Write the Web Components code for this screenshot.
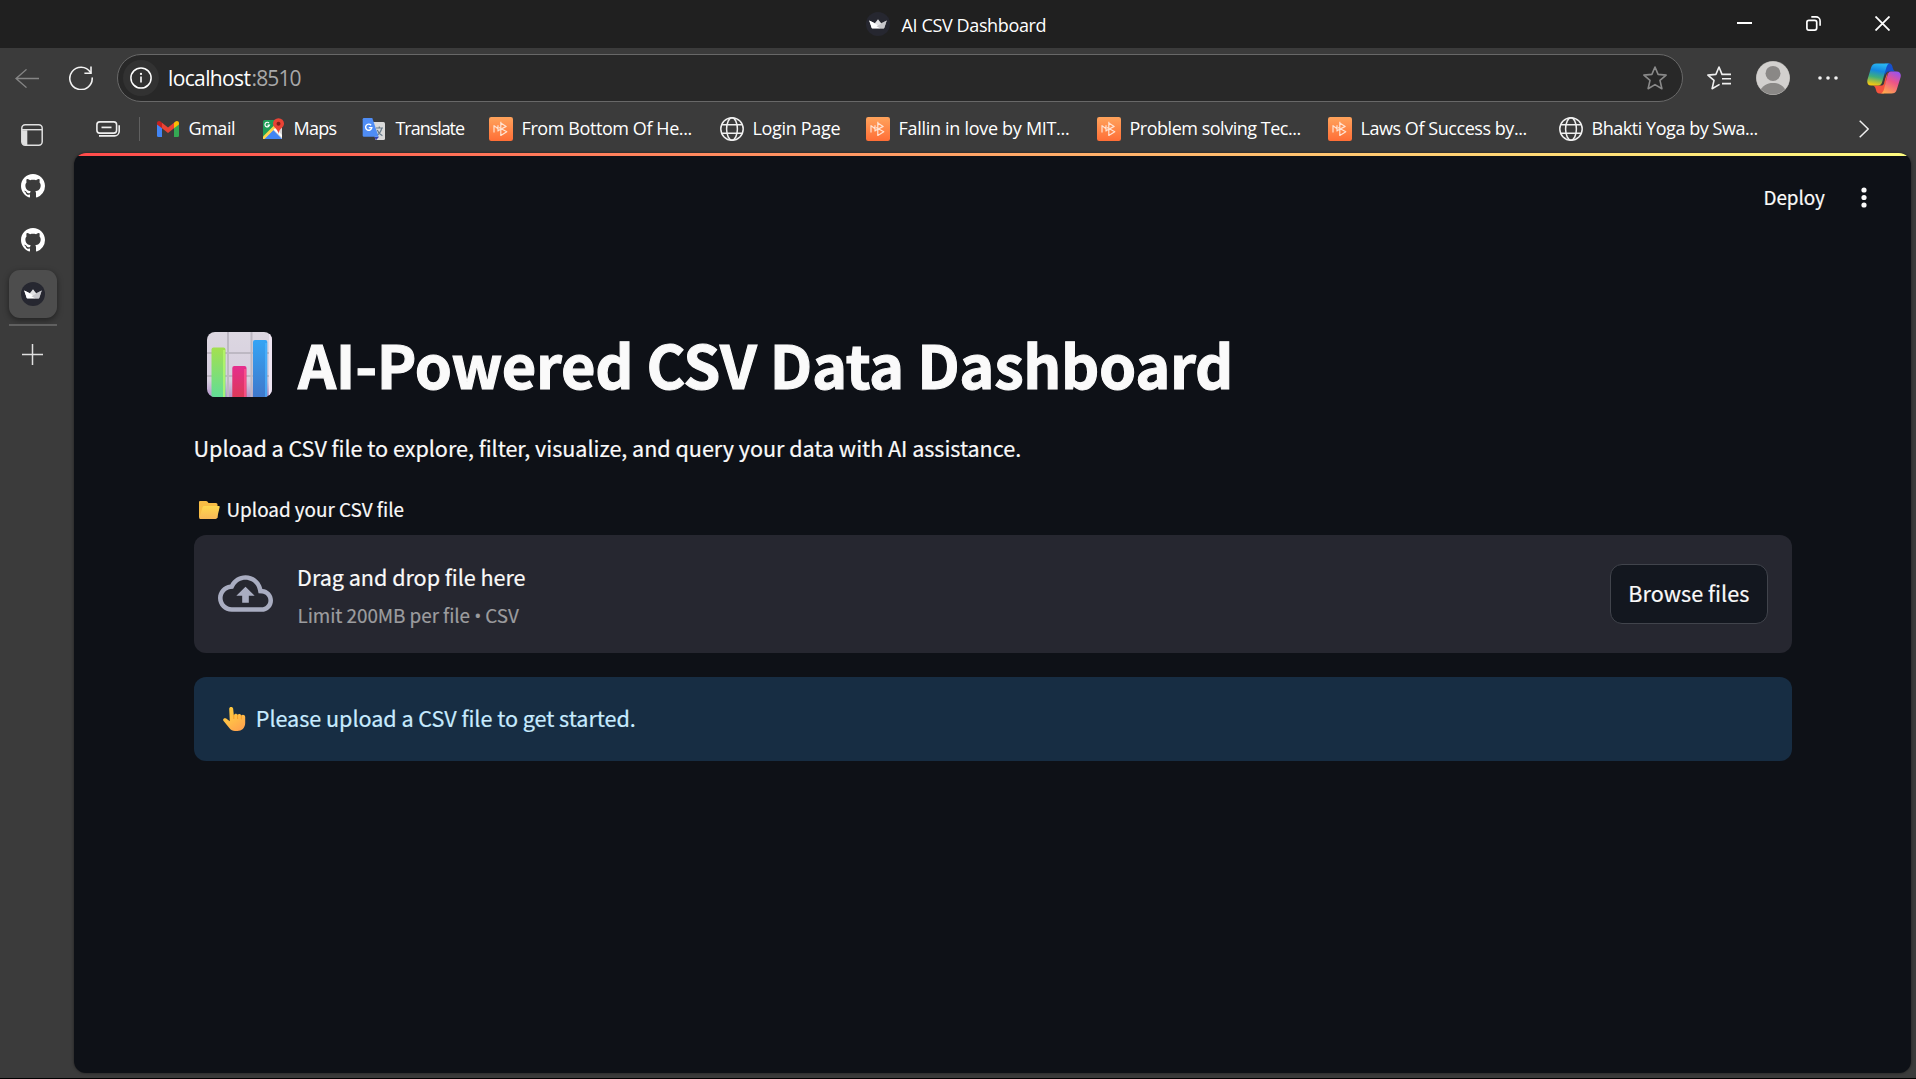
<!DOCTYPE html>
<html lang="en">
<head>
<meta charset="utf-8">
<title>AI CSV Dashboard</title>
<style>
html,body{margin:0;height:100%;background:#3b3b3b;overflow:hidden}
</style>
</head>
<body>
<browser-window></browser-window>
<script>
const ICONS = {
  crown: ['0 0 24 24', `<circle cx="12" cy="12" r="12" fill="#262730"/><path d="M3.2 8.4 9 11.2 5.8 16.1Z" fill="#fff"/><path d="M20.8 8.4 15 11.2 18.2 16.1Z" fill="#a9a9ad"/><path d="M12 7.2 16.6 13 18 16.4H6L7.4 13Z" fill="#e2e2e4"/><path d="M5.8 16.2 3.3 8.6 14 14.5V16.2Z" fill="#fff"/><path d="M20.7 8.6 10.5 14.2 14 16.3H18.2Z" fill="#c8c8cc"/>`],
  github: ['0 0 16 16', `<path fill="#fff" d="M8 0C3.58 0 0 3.58 0 8c0 3.54 2.29 6.53 5.47 7.59.4.07.55-.17.55-.38 0-.19-.01-.82-.01-1.49-2.01.37-2.53-.49-2.69-.94-.09-.23-.48-.94-.82-1.13-.28-.15-.68-.52-.01-.53.63-.01 1.08.58 1.23.82.72 1.21 1.87.87 2.33.66.07-.52.28-.87.51-1.07-1.78-.2-3.64-.89-3.64-3.95 0-.87.31-1.59.82-2.15-.08-.2-.36-1.02.08-2.12 0 0 .67-.21 2.2.82.64-.18 1.32-.27 2-.27s1.36.09 2 .27c1.53-1.04 2.2-.82 2.2-.82.44 1.1.16 1.92.08 2.12.51.56.82 1.27.82 2.15 0 3.07-1.87 3.75-3.65 3.95.29.25.54.73.54 1.48 0 1.07-.01 1.93-.01 2.2 0 .21.15.46.55.38A8.01 8.01 0 0 0 16 8c0-4.42-3.58-8-8-8Z"/>`],
  tabs: ['0 0 22 22', `<rect x=".8" y=".8" width="20.4" height="20.4" rx="3.4" fill="none" stroke="#e0e0e0" stroke-width="1.5"/><path d="M1 6.2V18a3 3 0 0 0 3 3h2.3V6.2Z" fill="#e0e0e0"/><path d="M1 5.7H21" stroke="#e0e0e0" stroke-width="1.4"/>`],
  plus: ['0 0 21 21', `<path d="M10.5 0V21M0 10.5H21" stroke="#e0e0e0" stroke-width="1.5"/>`],
  back: ['0 0 24 24', `<path d="M24 12H1M11.5 1.6 1 12 11.5 22.4" fill="none" stroke="#858585" stroke-width="1.5"/>`],
  reload: ['0 0 24 24', `<path d="M23.2 12A11.2 11.2 0 1 1 21.4 6.3" fill="none" stroke="#f2f2f2" stroke-width="1.6" stroke-linecap="round"/><path d="M22 .5V7.2H15.4" fill="none" stroke="#f2f2f2" stroke-width="1.6"/>`],
  info: ['0 0 22 22', `<circle cx="11" cy="11" r="10.1" fill="none" stroke="#fff" stroke-width="1.5"/><path d="M11 9.5V15.4" stroke="#fff" stroke-width="1.6"/><circle cx="11" cy="6.9" r="1.1" fill="#fff"/>`],
  star: ['0 0 24 24', `<path d="M12 1 15.1 8.4 23.1 9.1 17 14.4 18.9 22.7 12 18.6 5.1 22.7 7 14.4.9 9.1 8.9 8.4Z" fill="none" stroke="#8a8a8a" stroke-width="1.6" stroke-linejoin="round"/>`],
  favs: ['0 0 24 24', `<path d="M12.6 18.4 5.1 22.7 7 14.4.9 9.1 8.9 8.4 12 1 15 8.4H24" fill="none" stroke="#f0f0f0" stroke-width="1.6" stroke-linejoin="round"/><path d="M15 12.8H24M15 17.6H24" stroke="#f0f0f0" stroke-width="1.6"/>`],
  avatar: ['0 0 34 34', `<clipPath id="a"><circle cx="17" cy="17" r="16.6"/></clipPath><circle cx="17" cy="17" r="17" fill="#a9a7a4"/><g clip-path="url(#a)"><rect width="34" height="34" fill="#d2d0ce"/><circle cx="17" cy="12.4" r="7.5" fill="#8a8886"/><path d="M3 32C6 24.5 11 22 17 22S28 24.5 31 32L17 36Z" fill="#8a8886"/></g>`],
  dots: ['0 0 20 6', `<g fill="#f2f2f2"><circle cx="2" cy="3" r="1.8"/><circle cx="10" cy="3" r="1.8"/><circle cx="18" cy="3" r="1.8"/></g>`],
  copilot: ['0 0 34 31', `<defs><linearGradient id="b" x1=".4" y1="0" x2=".2" y2="1"><stop offset="0" stop-color="#28b4f0"/><stop offset=".3" stop-color="#1487e0"/><stop offset=".6" stop-color="#3fae7c"/><stop offset=".95" stop-color="#f0c814"/></linearGradient><linearGradient id="c" x1=".8" y1="0" x2=".3" y2="1"><stop offset="0" stop-color="#9852f0"/><stop offset=".45" stop-color="#ee5487"/><stop offset="1" stop-color="#ffa84e"/></linearGradient></defs><path d="M18 .5H22.4C24.8.5 25.3 3 26 5.6 26.7 8 27.6 8.3 29.5 8.5H22C19.7 8.5 18.4 10.4 17.7 13Z" fill="#1650cc"/><path d="M8.5 22.5H14C16 22.5 16.5 20.5 17.5 17L20.8 8.7 17 30.5H12.5C10.3 30.5 9.5 29 9 27 8.4 24.5 7.7 23.2 6 22.5Z" fill="#f5533d"/><path d="M9.5 .5H23C20.9.5 20 2.3 19.2 5L15.4 18.3C14.6 21.2 13.4 22.5 11 22.5H4.2C.7 22.5-.3 19.5.5 16.5L4.1 4.6C5 1.6 6.6.5 9.5.5Z" fill="url(#b)"/><path d="M24 8.5H29.4C33.3 8.5 34.4 11.3 33.5 14.5L29.8 26.5C28.9 29.5 27.2 30.5 24.4 30.5H13C15.3 30.5 16.2 29 17 26.3L20.4 12.5C21.2 9.8 22 8.5 24 8.5Z" fill="url(#c)"/><path d="M18.8 11.5 17 20.5Q16.4 22.5 14.5 22.5 15 21.5 15.5 19.8Z" fill="#3b3b3b"/>`],
  minimize: ['0 0 15 15', `<path d="M0 7H15" stroke="#fff" stroke-width="2"/>`],
  restore: ['0 0 15 15', `<rect x=".9" y="4.3" width="9.8" height="9.8" rx="2" fill="none" stroke="#fff" stroke-width="1.7"/><path d="M5.3.9H10a4.1 4.1 0 0 1 4.1 4.1V9.8" fill="none" stroke="#fff" stroke-width="1.6"/>`],
  close: ['0 0 15 15', `<path d="M.5.5 14.5 14.5M14.5.5.5 14.5" stroke="#fff" stroke-width="1.8"/>`],
  stack: ['0 0 24 16', `<rect x=".9" y=".9" width="19.7" height="11.2" rx="2.8" fill="none" stroke="#eee" stroke-width="1.6"/><path d="M5.5 6.4H15.5" stroke="#eee" stroke-width="1.7"/><path d="M3 14.9H18.5A4.8 4.8 0 0 0 23.2 10.2V4.2" fill="none" stroke="#eee" stroke-width="1.6"/>`],
  gmail: ['0 0 22 16', `<path d="M0 3V14.7Q0 16 1.4 16H5V6Z" fill="#4285f4"/><path d="M22 3V14.7Q22 16 20.6 16H17V6Z" fill="#34a853"/><path d="M5 1.8 11 6.4 17 1.8V7.3L11 12 5 7.3Z" fill="#ea4335"/><path d="M0 2.2C0 .2 2.2-.7 3.9.8L5 1.8V7.3L0 3.6Z" fill="#c5221f"/><path d="M22 2.2C22 .2 19.8-.7 18.1.8L17 1.8V7.3L22 3.6Z" fill="#fbbc04"/>`],
  maps: ['0 0 22 22', `<rect x="1" y="2" width="19" height="19" rx="1.5" fill="#1f9d57"/><path d="M1 20 12 8.5 20 5V21H2Z" fill="#d8d8d8"/><path d="M2 21 11.2 12 20 21Z" fill="#4285f4"/><path d="M1 18.5 13 6.5 14.6 9 2.5 21H1Z" fill="#fdd34b"/><path d="M13.5 10 20 17V19.5L11.5 11.5Z" fill="#fff"/><path d="M16.5.2A5.5 5.5 0 0 0 11 5.8C11 9.7 15.8 10.2 16.4 16 17 10.2 22 9.7 22 5.8A5.5 5.5 0 0 0 16.5.2Z" fill="#ea4335"/><circle cx="16.5" cy="5.7" r="2" fill="#7d201b"/><path d="M7 5A2.3 2.3 0 1 0 7.5 7.2H5.5" fill="none" stroke="#fff" stroke-width="1.2"/>`],
  translate: ['0 0 24 24', `<path d="M9 5H21.5Q23 5 23 6.5V21.5Q23 23 21.5 23H13.5Z" fill="#dadada"/><path d="M14 11H21M17.3 9.5V11M19.8 11C19 14.5 17 17 14.4 18.5M15.2 13C16.3 15.6 18 17.4 20.4 18.8" fill="none" stroke="#6a7d8c" stroke-width="1.2"/><path d="M12.3 19.8H17L14 23.2Z" fill="#3340b0"/><path d="M2 1H10.3L16.6 19.8H2Q.7 19.8.7 18.5V2.3Q.7 1 2 1Z" fill="#4f8df5"/><path d="M9.1 8.2A3.1 3.1 0 1 0 9.8 10.6H6.8" fill="none" stroke="#fff" stroke-width="1.4"/>`],
  mb: ['0 0 24 24', `<defs><linearGradient id="d" x2="0" y2="1"><stop stop-color="#ffa35c"/><stop offset="1" stop-color="#ff6e36"/></linearGradient></defs><rect width="24" height="24" rx="2.2" fill="url(#d)"/><path d="M5 15.5V8.6L9 11.8M9 8.2V14.5M11.8 4.8V19M11.8 6 17.2 9.4 9 13.8M10 10.5 17.8 14.8 11.8 18.6" fill="none" stroke="#ffe3d2" stroke-width="1.2" stroke-linejoin="round"/>`],
  globe: ['0 0 24 24', `<g fill="none" stroke="#f0f0f0" stroke-width="1.5"><circle cx="12" cy="12" r="11.2"/><ellipse cx="12" cy="12" rx="5.4" ry="11.2"/><path d="M2 7.7H22M2 16.3H22"/></g>`],
  chevron: ['0 0 10 18', `<path d="M.7.7 9.2 9 .7 17.3" fill="none" stroke="#f0f0f0" stroke-width="1.5"/>`],
  kebab: ['0 0 6 21', `<g fill="#fafafa"><circle cx="3" cy="3" r="2.6"/><circle cx="3" cy="10.5" r="2.6"/><circle cx="3" cy="18" r="2.6"/></g>`],
  cloud: ['0 0 24 24', `<path fill="#a9adc1" d="M19.35 10.04C18.67 6.59 15.64 4 12 4 9.11 4 6.6 5.64 5.35 8.04 2.34 8.36 0 10.91 0 14c0 3.31 2.69 6 6 6h13c2.76 0 5-2.24 5-5 0-2.64-2.05-4.78-4.65-4.96zM19 18H6c-2.21 0-4-1.79-4-4 0-2.05 1.53-3.76 3.56-3.97l1.07-.11.5-.95C8.08 7.14 9.94 6 12 6c2.62 0 4.88 1.86 5.39 4.43l.3 1.5 1.53.11c1.56.1 2.78 1.41 2.78 2.96 0 1.65-1.35 3-3 3zM8 13h2.55v3h2.9v-3H16l-4-4z"/>`],
  chart: ['0 0 65 65', `<defs><linearGradient id="g" x2="0" y2="1"><stop stop-color="#a4e04f"/><stop offset="1" stop-color="#62dd96"/></linearGradient><linearGradient id="h" x2="0" y2="1"><stop stop-color="#e52e8e"/><stop offset="1" stop-color="#dc3958"/></linearGradient><linearGradient id="i" x2="0" y2="1"><stop stop-color="#35a4f4"/><stop offset="1" stop-color="#3f78cb"/></linearGradient><linearGradient id="j" x2="0" y2="1"><stop stop-color="#dcd7e1"/><stop offset=".75" stop-color="#d6cede"/><stop offset="1" stop-color="#b394cc"/></linearGradient><clipPath id="k"><rect width="65" height="65" rx="8"/></clipPath></defs><g clip-path="url(#k)"><rect width="65" height="65" fill="url(#j)"/><path d="M0 21H65M0 44H65M21 0V65M44.5 0V65" stroke="#bdb8c3" stroke-width="2"/><path d="M63.5 0V65" stroke="#eee5f2" stroke-width="3"/><path d="M4.5 65V17.5Q4.5 15.5 6.5 15.5H16.5Q18.5 15.5 18.5 17.5V65Z" fill="url(#g)"/><path d="M17 18V65" stroke="#b9f96c" stroke-width="2" opacity=".75"/><path d="M25.3 65V36Q25.3 34 27.3 34H37.5Q39.5 34 39.5 36V65Z" fill="url(#h)"/><path d="M38 37V65" stroke="#ff568f" stroke-width="2" opacity=".75"/><path d="M46 65V10Q46 8 48 8H58.3Q60.3 8 60.3 10V65Z" fill="url(#i)"/><path d="M59 11V65" stroke="#4eb5ff" stroke-width="2" opacity=".7"/></g>`],
  folder: ['0 0 21 18', `<defs><linearGradient id="l" x2="0" y2="1"><stop stop-color="#ffd84f"/><stop offset="1" stop-color="#f8b757"/></linearGradient></defs><path d="M0 1Q0 0 1 0H7Q8 0 8.6.8L9.5 2H17Q18.5 2 18.5 3.5V17H1Q0 17 0 16Z" fill="#f8bd45"/><path d="M5.4 5H19.8Q21 5 20.7 6.1L18.2 16.5Q17.8 18 16.3 18H1.2Q0 18 .4 16.8L3.6 6.3Q4 5 5.4 5Z" fill="url(#l)"/>`],
  hand: ['0 0 23 24', `<defs><linearGradient id="m" x2=".6" y2="1"><stop stop-color="#ffcc38"/><stop offset=".6" stop-color="#ffbd48"/><stop offset="1" stop-color="#ffa64d"/></linearGradient></defs><path d="M6.2 1.9C6.2-.5 10-.6 10.2 1.9L10.8 8.3C11.5 6 14.2 6.3 14.6 8.1 15.4 6.3 18 6.8 18.3 8.7 19.3 7 22.1 7.7 22.2 10V16C22.2 21 18.5 24 14.5 24H12C9.5 24 8 23 6.5 21.3L.6 14.1C-.9 12.1 1.4 10.3 3.2 11.6L6.8 14.2Z" fill="url(#m)"/><path d="M10.8 8.3V11.6M14.6 8.1V11.6M18.3 8.7V12" stroke="#f3961f" stroke-width=".8" stroke-linecap="round"/>`]
};

// <ui-icon name w h>: inline vector icon at a given size
class UiIcon extends HTMLElement {
  connectedCallback() {
    if (this.shadowRoot) return;
    const [vb, body] = ICONS[this.getAttribute('name')];
    const w = this.getAttribute('w'), h = this.getAttribute('h') || w;
    this.attachShadow({mode: 'open'}).innerHTML =
      `<style>:host{display:block;flex:none;width:${w}px;height:${h}px}svg{display:block;width:100%;height:100%}</style>
       <svg viewBox="${vb}" preserveAspectRatio="none" aria-hidden="true">${body}</svg>`;
  }
}
customElements.define('ui-icon', UiIcon);

// <fit-text w>: one line of text whose ink spans exactly w pixels
const measure = document.createElement('canvas').getContext('2d');
class FitText extends HTMLElement {
  connectedCallback() {
    if (this.shadowRoot) return;
    const w = +this.getAttribute('w');
    this.attachShadow({mode: 'open'}).innerHTML =
      `<style>:host{display:block;flex:none;width:${w}px;white-space:nowrap}span{display:block;width:max-content}</style><span><slot></slot></span>`;
    const cs = getComputedStyle(this), text = this.textContent;
    measure.font = `${cs.fontWeight} ${cs.fontSize} ${cs.fontFamily}`;
    const m = measure.measureText(text);
    const bearings = m.width - m.actualBoundingBoxLeft - m.actualBoundingBoxRight;
    const span = this.shadowRoot.querySelector('span');
    const ink = span.getBoundingClientRect().width - bearings;
    span.style.letterSpacing = ((w - ink) / (text.length - 1)).toFixed(3) + 'px';
    span.style.marginLeft = m.actualBoundingBoxLeft.toFixed(2) + 'px';
  }
}
customElements.define('fit-text', FitText);

function component(tag, html) {
  const t = document.createElement('template');
  t.innerHTML = html;
  customElements.define(tag, class extends HTMLElement {
    constructor() {
      super();
      this.attachShadow({mode: 'open'}).append(document.importNode(t.content, true));
    }
  });
}

component('title-bar', `<style>
:host{display:flex;align-items:flex-start;height:48px;background:#202020;color:#fff;box-sizing:border-box;padding-left:866px;font:18px/24px "Open Sans",sans-serif}
ui-icon{margin-top:12px}fit-text{margin:13px 0 0 11.5px}
.w{display:flex;gap:54px;margin:16px 26px 0 auto}.w ui-icon{margin:0}
</style><ui-icon name="crown" w="24"></ui-icon><fit-text w="144">AI CSV Dashboard</fit-text>
<div class="w"><ui-icon name="minimize" w="15"></ui-icon><ui-icon name="restore" w="15"></ui-icon><ui-icon name="close" w="15"></ui-icon></div>`);

component('address-bar', `<style>
:host{display:flex;align-items:center;height:48px;width:1566px;box-sizing:border-box;border:1px solid #686868;border-radius:24px;background:#282828;padding:0 15px 0 5px;color:#fff;font:21px/28px "Open Sans",sans-serif}
.i{display:grid;place-items:center;width:36px;height:36px;border-radius:50%;background:#323232}
.t{display:flex;margin-left:10px}.p{color:#a8a8a8;margin-left:2px}
ui-icon[name=star]{margin-left:auto}
</style><div class="i"><ui-icon name="info" w="22"></ui-icon></div>
<div class="t"><fit-text w="81.5">localhost</fit-text><fit-text class="p" w="48">:8510</fit-text></div><ui-icon name="star" w="24"></ui-icon>`);

component('tool-bar', `<style>
:host{display:flex;align-items:center;height:60px;box-sizing:border-box;padding:0 15px}
address-bar{margin-left:24px}
ui-icon[name=back]{margin-right:30px}.g{display:flex;align-items:center;margin-left:auto}
</style><ui-icon name="back" w="24" h="21"></ui-icon><ui-icon name="reload" w="24"></ui-icon><address-bar></address-bar>
<div class="g"><ui-icon name="favs" w="24"></ui-icon><ui-icon name="avatar" w="34" style="margin-left:25px"></ui-icon><ui-icon name="dots" w="20" h="6" style="margin-left:28px"></ui-icon><ui-icon name="copilot" w="34" h="31" style="margin-left:29px"></ui-icon></div>`);

component('book-mark', `<style>
:host{display:flex;align-items:center;flex:none;gap:9.5px}
.i{display:grid;place-items:center;width:24px;flex:none}
::slotted(fit-text){margin-top:-2px}
</style><div class="i"><slot name="icon"></slot></div><slot></slot>`);

component('bookmark-bar', `<style>
:host{display:flex;align-items:center;flex:none;height:45px;box-sizing:border-box;padding:0 47px 3px 22px;color:#fff;font:18px/24px "Open Sans",sans-serif}
.d{width:1px;height:24px;background:#606060;margin:0 16px 0 19px}
ui-icon[name=chevron]{margin-left:auto}
</style><ui-icon name="stack" w="24" h="16"></ui-icon><div class="d"></div>
<book-mark style="width:105px"><ui-icon slot="icon" name="gmail" w="22" h="16"></ui-icon><fit-text w="44.5">Gmail</fit-text></book-mark>
<book-mark style="width:101px"><ui-icon slot="icon" name="maps" w="22"></ui-icon><fit-text w="42">Maps</fit-text></book-mark>
<book-mark style="width:127px"><ui-icon slot="icon" name="translate" w="24"></ui-icon><fit-text w="69.5">Translate</fit-text></book-mark>
<book-mark style="width:231px"><ui-icon slot="icon" name="mb" w="24"></ui-icon><fit-text w="169">From Bottom Of He...</fit-text></book-mark>
<book-mark style="width:146px"><ui-icon slot="icon" name="globe" w="24"></ui-icon><fit-text w="87">Login Page</fit-text></book-mark>
<book-mark style="width:231px"><ui-icon slot="icon" name="mb" w="24"></ui-icon><fit-text w="169.5">Fallin in love by MIT...</fit-text></book-mark>
<book-mark style="width:231px"><ui-icon slot="icon" name="mb" w="24"></ui-icon><fit-text w="170">Problem solving Tec...</fit-text></book-mark>
<book-mark style="width:231px"><ui-icon slot="icon" name="mb" w="24"></ui-icon><fit-text w="165">Laws Of Success by...</fit-text></book-mark>
<book-mark><ui-icon slot="icon" name="globe" w="24"></ui-icon><fit-text w="165">Bhakti Yoga by Swa...</fit-text></book-mark>
<ui-icon name="chevron" w="10" h="18"></ui-icon>`);

component('side-tabs', `<style>
:host{display:flex;flex-direction:column;align-items:center;width:66px;box-sizing:border-box;padding-top:16px;flex:none}
.a{display:grid;place-items:center;width:48px;height:48px;border-radius:11px;background:#4d4d4d;box-shadow:0 2px 6px rgba(0,0,0,.45);margin-top:18px}
.d{width:48px;height:2px;background:#606060;margin:6px 0 18px}
</style><ui-icon name="tabs" w="22" style="margin-right:2px"></ui-icon><ui-icon name="github" w="24" style="margin-top:28px"></ui-icon><ui-icon name="github" w="24" style="margin-top:30px"></ui-icon>
<div class="a"><ui-icon name="crown" w="24"></ui-icon></div><div class="d"></div><ui-icon name="plus" w="21" style="margin-right:1px"></ui-icon>`);

component('file-uploader', `<style>
:host{display:flex;align-items:center;box-sizing:border-box;height:118px;background:#262730;border-radius:12px;padding:0 24px}
ui-icon{margin-top:-2px}
.t{margin-left:25.5px;height:70px}.m{line-height:36px;margin:0 0 0 .6px}.s{font-size:18.9px;line-height:32px;color:#9c9c9f;margin-top:4px}
.s i{font-family:"Open Sans",sans-serif;font-style:normal;line-height:1}
.b{margin-left:auto;width:158px;height:60px;box-sizing:border-box;border:1px solid #41444c;border-radius:12px;background:#13171f;display:grid;place-items:center;line-height:36px}
.b fit-text{margin:-3px 0 0 1.5px}
</style><ui-icon name="cloud" w="55" h="55"></ui-icon><div class="t"><fit-text class="m" w="226.5">Drag and drop file here</fit-text><fit-text class="s" w="220.5">Limit 200MB per file <i>•</i> CSV</fit-text></div>
<div class="b"><fit-text w="119">Browse files</fit-text></div>`);

component('info-alert', `<style>
:host{display:flex;align-items:center;box-sizing:border-box;height:84px;background:#172d43;border-radius:12px;color:#c7ebff;padding-left:29px;margin-top:24px;line-height:36px}
ui-icon{margin-top:-1px}fit-text{margin:-2px 0 0 11.8px}
</style><ui-icon name="hand" w="23" h="24"></ui-icon><fit-text w="377">Please upload a CSV file to get started.</fit-text>`);

component('dashboard-page', `<style>
:host{display:flex;flex-direction:column;height:920px;margin:0 5px 0 8px;box-sizing:border-box;background:#0e1117;border-radius:12px;overflow:hidden;color:#fafafa;font:21.6px/36px "Noto Sans CJK SC","Noto Sans",sans-serif;-webkit-text-stroke:.2px;box-shadow:0 0 3px rgba(0,0,0,.5)}
.g{height:3px;flex:none;background:linear-gradient(90deg,#ff4b4b,#ffa667 50%,#fffd80)}
header{display:flex;flex:none;justify-content:flex-end;align-items:center;height:84px;padding-right:44px;gap:36px;font-size:18.9px;line-height:32px;box-sizing:border-box}
header fit-text{margin-top:-3px}header ui-icon{margin-top:-1px}
main{display:flex;flex-direction:column;padding:84px 119px 0 120px}
h1{display:flex;align-items:center;margin:0;height:81px;padding-left:13px;gap:25px;font-size:59.5px;line-height:80px;font-weight:700;-webkit-text-stroke:1.1px}
h1 fit-text{margin-top:-4px}
.p{margin:25px 0 0 1.6px}.l{display:flex;align-items:center;height:32px;margin:27px 0 10px 5px;gap:7.5px;font-size:18.9px;line-height:32px}
.l ui-icon{margin-top:2px}
</style><div class="g"></div>
<header><fit-text w="60.5">Deploy</fit-text><ui-icon name="kebab" w="6" h="21"></ui-icon></header>
<main><h1><ui-icon name="chart" w="65" h="65"></ui-icon><fit-text w="932">AI-Powered CSV Data Dashboard</fit-text></h1>
<fit-text class="p" w="824.5">Upload a CSV file to explore, filter, visualize, and query your data with AI assistance.</fit-text>
<div class="l"><ui-icon name="folder" w="21" h="18"></ui-icon><fit-text w="176">Upload your CSV file</fit-text></div>
<file-uploader></file-uploader><info-alert></info-alert></main>`);

component('browser-window', `<style>
:host{display:flex;flex-direction:column;width:1916px;height:1079px;box-sizing:border-box;border-bottom:1px solid #000;background:#3b3b3b;overflow:hidden}
title-bar,tool-bar{flex:none}
.b{display:flex;flex:1}.c{display:flex;flex-direction:column;flex:1}
bookmark-bar{margin-left:8px}dashboard-page{flex:none}
</style><title-bar></title-bar><tool-bar></tool-bar>
<div class="b"><side-tabs></side-tabs><div class="c"><bookmark-bar></bookmark-bar><dashboard-page></dashboard-page></div></div>`);
</script>
</body>
</html>
